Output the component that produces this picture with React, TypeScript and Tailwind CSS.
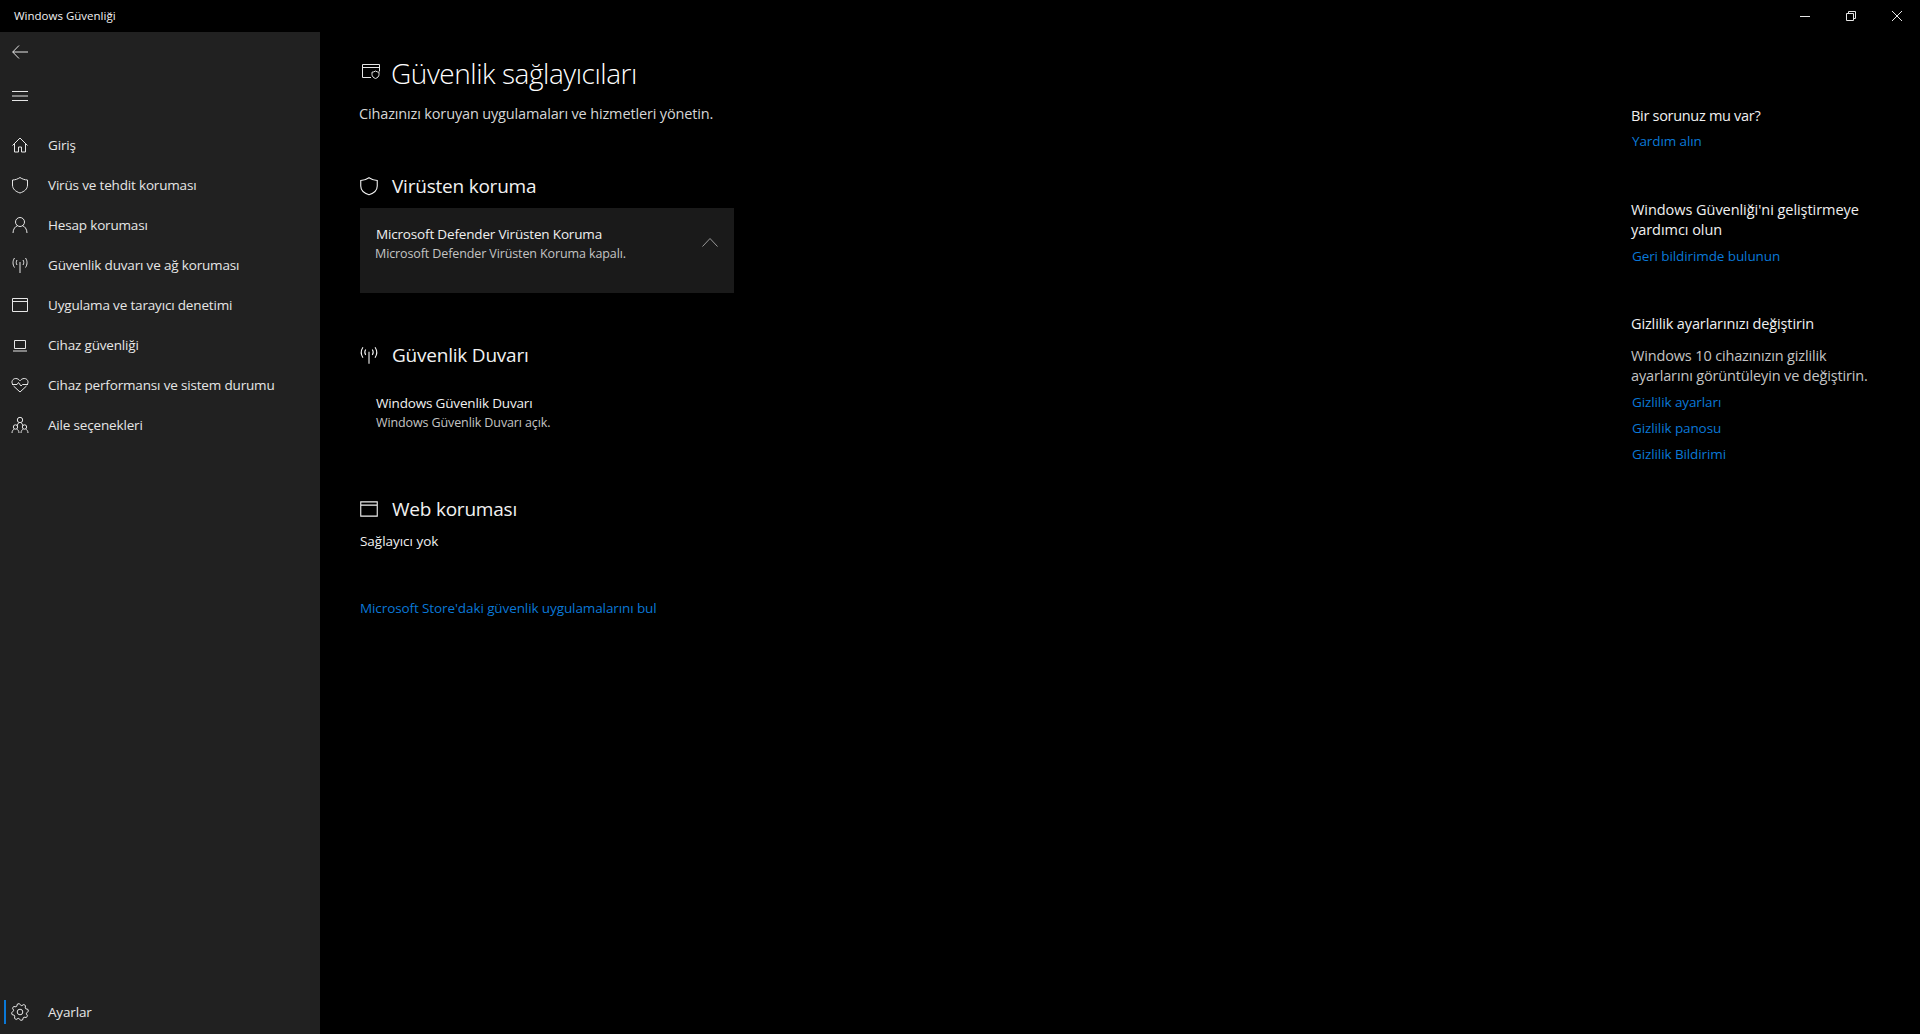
import type { ReactNode } from "react";

const FONT = "font-['Open_Sans','Noto_Sans',sans-serif]";

function Icon({ children, className = "w-5 h-5" }: { children: ReactNode; className?: string }) {
  return (
    <svg viewBox="0 0 20 20" fill="none" stroke="currentColor" strokeWidth="1" className={className}>
      {children}
    </svg>
  );
}

// 8 teeth, same outline as the system settings glyph
function gearPath() {
  const pts: string[] = [];
  for (let i = 0; i < 8; i++) {
    const a = (i * Math.PI) / 4 - Math.PI / 8;
    [
      [6.6, -0.12],
      [8.4, 0.08],
      [8.4, 0.32],
      [6.6, 0.52],
    ].forEach(([r, d]) => {
      const x = 10 + r * Math.cos(a + d);
      const y = 10 + r * Math.sin(a + d);
      pts.push(`${x.toFixed(2)} ${y.toFixed(2)}`);
    });
  }
  return `M${pts.join("L")}Z`;
}

const HomeIcon = () => (
  <Icon>
    <path d="M2.500 10.500 10 3l7.500 7.500M4.500 8.500V17h4v-5h3v5h4V8.500" />
  </Icon>
);
const ShieldIcon = () => (
  <Icon>
    <path d="M10 2.500c2.400 1.600 4.700 2.400 7.500 2.500v5c0 4-3 6.500-7.500 8-4.500-1.500-7.500-4-7.500-8V5c2.800-.1 5.100-.9 7.500-2.500Z" />
  </Icon>
);
const PersonIcon = () => (
  <Icon>
    <circle cx="10" cy="7" r="4.500" />
    <path d="M3 18c0-4 2.500-6.800 4.500-7.300M17 18c0-4-2.500-6.800-4.500-7.300" />
  </Icon>
);
const WifiIcon = () => (
  <Icon>
    <path d="M10 7v11M7 5c-1 1.500-1 3.500 0 5M13 5c1 1.500 1 3.500 0 5M4.500 3c-2 3-2 6.500 0 9.500M15.500 3c2 3 2 6.500 0 9.500" />
  </Icon>
);
const WindowIcon = () => (
  <Icon>
    <path d="M2.500 3.500h15v13h-15zM2.500 6.500h15" />
  </Icon>
);
const LaptopIcon = () => (
  <Icon>
    <path d="M4.500 5.500h11v8h-11zM3 16h14" />
  </Icon>
);
const HeartIcon = () => (
  <Icon>
    <path d="M2.500 9C1 6.500 2.800 3.500 5.800 3.500c1.700 0 3.200 1 4.200 2.300 1-1.300 2.500-2.300 4.200-2.300 3 0 4.800 3 3.300 5.500M3.500 11l6.500 6 6.500-6M2 9.500h5l1.500-2 2.500 3.500 1.500-1.500H18" />
  </Icon>
);
const FamilyIcon = () => (
  <Icon>
    <circle cx="10" cy="5" r="2.700" />
    <circle cx="5.500" cy="12" r="2.200" />
    <circle cx="14.500" cy="12" r="2.200" />
    <path d="M2 18c0-2 1-3.300 2.200-3.800M9 18c0-2-1-3.300-2.200-3.800M11 18c0-2 1-3.300 2.200-3.800M18 18c0-2-1-3.300-2.200-3.800M7 11c.3-1.500 1-2.500 1.800-3.200M13 11c-.3-1.500-1-2.500-1.800-3.200" />
  </Icon>
);
const GearIcon = () => (
  <Icon>
    <circle cx="10" cy="10" r="2.800" />
    <path d={gearPath()} />
  </Icon>
);
const ProvidersIcon = () => (
  <Icon>
    <path d="M10 15.500H1.500v-13h17v7M1.500 5.500h17" />
    <path d="M14.500 9c1.200.8 2.200 1.100 3.500 1.200v2.300c0 2-1.400 3.200-3.500 4-2.100-.8-3.500-2-3.500-4v-2.300c1.300-.1 2.300-.4 3.500-1.200Z" />
  </Icon>
);

const navItems = [
  { label: "Giriş", icon: <HomeIcon /> },
  { label: "Virüs ve tehdit koruması", icon: <ShieldIcon /> },
  { label: "Hesap koruması", icon: <PersonIcon /> },
  { label: "Güvenlik duvarı ve ağ koruması", icon: <WifiIcon /> },
  { label: "Uygulama ve tarayıcı denetimi", icon: <WindowIcon /> },
  { label: "Cihaz güvenliği", icon: <LaptopIcon /> },
  { label: "Cihaz performansı ve sistem durumu", icon: <HeartIcon /> },
  { label: "Aile seçenekleri", icon: <FamilyIcon /> },
];

function NavRow({ label, icon }: { label: string; icon: ReactNode }) {
  return (
    <div className="flex h-10 items-center pl-[10px] text-[13.5px] tracking-[-0.17px] text-[#e6e6e6]">
      <span className="mr-[18px] flex w-[20px] justify-center">{icon}</span>
      <span>{label}</span>
    </div>
  );
}

function SectionTitle({ icon, children }: { icon: ReactNode; children: ReactNode }) {
  return (
    <div className="flex h-7 items-center text-[19px] tracking-[-0.22px] text-[#f2f2f2]">
      <span className="-ml-[2px] mr-[12px] flex w-[22px] justify-center [&>svg]:h-6 [&>svg]:w-6">{icon}</span>
      <span>{children}</span>
    </div>
  );
}

function Link({ children }: { children: ReactNode }) {
  return <div className="h-[26px] text-[13.5px] leading-[26px] tracking-[-0.1px] text-[#0a78d7]">{children}</div>;
}

export default function App() {
  return (
    <div className={`flex h-[1034px] w-[1920px] flex-col overflow-hidden bg-black text-white ${FONT}`}>
      <header className="flex h-8 shrink-0 items-center justify-between">
        <span className="pl-[14px] text-[11.5px] text-[#f0f0f0]">Windows Güvenliği</span>
        <div className="flex items-center text-[#e6e6e6]">
          <svg viewBox="0 0 10 10" stroke="currentColor" fill="none" className="mr-[36px] h-[10px] w-[10px]">
            <path d="M0 5.500h10" />
          </svg>
          <svg viewBox="0 0 10 10" stroke="currentColor" fill="none" className="mr-[36px] h-[10px] w-[10px]">
            <path d="M.5 2.500h7v7h-7zM2.500 2.500v-2h7v7h-2" />
          </svg>
          <svg viewBox="0 0 10 10" stroke="currentColor" fill="none" className="mr-[18px] h-[10px] w-[10px]">
            <path d="m0 0 10 10M10 0 0 10" />
          </svg>
        </div>
      </header>

      <div className="flex min-h-0 flex-1">
        <aside className="flex w-[320px] shrink-0 flex-col bg-[#212121]">
          <div className="flex h-10 items-center pl-3 text-[#e6e6e6]">
            <svg viewBox="0 0 16 14" stroke="currentColor" fill="none" className="h-[14px] w-4">
              <path d="M16 7H.7M7 .5.700 7 7 13.500" />
            </svg>
          </div>
          <div className="mt-1 flex h-10 items-center pl-3 text-[#e6e6e6]">
            <svg viewBox="0 0 16 10" stroke="currentColor" fill="none" className="h-[10px] w-4">
              <path d="M0 .5h16M0 5h16M0 9.500h16" />
            </svg>
          </div>
          <nav className="mt-[9px] flex-1">
            {navItems.map((item) => (
              <NavRow key={item.label} label={item.label} icon={item.icon} />
            ))}
          </nav>
          <div className="relative mb-[2px]">
            <span className="absolute left-1 top-2 h-6 w-[2px] bg-[#0a78d7]" />
            <NavRow label="Ayarlar" icon={<GearIcon />} />
          </div>
        </aside>

        <main className="flex flex-1 justify-between">
          <section className="pl-[40px]">
            <div className="mt-[21px] flex h-[40px] items-center text-[28px] font-light tracking-[-0.45px] text-white">
              <span className="-mt-[2px] mr-[9px] flex w-[22px] justify-center text-[#e6e6e6]">
                <ProvidersIcon />
              </span>
              <h1>Güvenlik sağlayıcıları</h1>
            </div>
            <p className="-ml-px mt-[10px] text-[14.5px] tracking-[-0.15px] text-[#d6d6d6]">
              Cihazınızı koruyan uygulamaları ve hizmetleri yönetin.
            </p>

            <div className="mt-[47px]">
              <SectionTitle icon={<ShieldIcon />}>Virüsten koruma</SectionTitle>
            </div>
            <div className="mt-2 flex h-[85px] w-[374px] justify-between bg-[#1a1a1a] pl-4 pr-4 pt-[16px]">
              <div>
                <div className="text-[13.5px] leading-5 tracking-[-0.17px] text-[#f0f0f0]">Microsoft Defender Virüsten Koruma</div>
                <div className="-ml-px text-[12.5px] leading-5 tracking-[-0.11px] text-[#c4c4c4]">Microsoft Defender Virüsten Koruma kapalı.</div>
              </div>
              <svg viewBox="0 0 16 9" stroke="currentColor" fill="none" className="mt-[14px] h-[9px] w-4 text-[#9a9a9a]">
                <path d="m.5 8.500 7.500-8 7.500 8" />
              </svg>
            </div>

            <div className="mt-[48px]">
              <SectionTitle icon={<WifiIcon />}>Güvenlik Duvarı</SectionTitle>
            </div>
            <div className="mt-[24px] pl-4">
              <div className="text-[13.5px] leading-5 tracking-[-0.17px] text-[#f0f0f0]">Windows Güvenlik Duvarı</div>
              <div className="text-[12.5px] leading-5 tracking-[-0.11px] text-[#c4c4c4]">Windows Güvenlik Duvarı açık.</div>
            </div>

            <div className="mt-[62px]">
              <SectionTitle icon={<WindowIcon />}>Web koruması</SectionTitle>
            </div>
            <p className="mt-[8px] text-[13.5px] leading-5 tracking-[-0.03px] text-[#f0f0f0]">Sağlayıcı yok</p>
            <div className="mt-[44px]">
              <Link>Microsoft Store'daki güvenlik uygulamalarını bul</Link>
            </div>
          </section>

          <section className="w-[288px] pt-[72px]">
            <h2 className="-ml-px text-[14.5px] leading-6 tracking-[-0.3px] text-[#f0f0f0]">Bir sorunuz mu var?</h2>
            <Link>Yardım alın</Link>

            <h2 className="-ml-px mt-[46px] w-[250px] text-[14.5px] leading-5 tracking-[-0.05px] text-[#f0f0f0]">
              Windows Güvenliği'ni geliştirmeye yardımcı olun
            </h2>
            <div className="mt-[3px]">
              <Link>Geri bildirimde bulunun</Link>
            </div>

            <h2 className="-ml-px mt-[43px] text-[14.5px] leading-6 tracking-[-0.13px] text-[#f0f0f0]">Gizlilik ayarlarınızı değiştirin</h2>
            <p className="-ml-px mt-[10px] w-[250px] text-[14.5px] leading-5 tracking-[-0.15px] text-[#c4c4c4]">
              Windows 10 cihazınızın gizlilik ayarlarını görüntüleyin ve değiştirin.
            </p>
            <div className="mt-[3px]">
              <Link>Gizlilik ayarları</Link>
              <Link>Gizlilik panosu</Link>
              <Link>Gizlilik Bildirimi</Link>
            </div>
          </section>
        </main>
      </div>
    </div>
  );
}
